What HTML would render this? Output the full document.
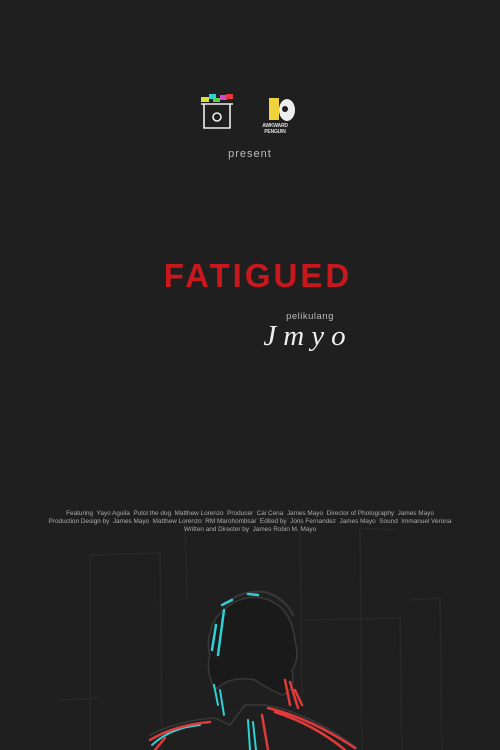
<!DOCTYPE html>
<html><head><meta charset="utf-8"><style>
html,body{margin:0;padding:0;}
body{width:500px;height:750px;background:#1f1f1f;position:relative;overflow:hidden;font-family:"Liberation Sans",sans-serif;}
.t{position:absolute;left:0;width:500px;text-align:center;}
</style></head><body>
<svg width="500" height="750" style="position:absolute;left:0;top:0">
<rect width="500" height="750" fill="#1f1f1f"/>
<g stroke="#282828" stroke-width="1.5" fill="none">
<path d="M90 555 L90 750 M90 555 L160 553 L162 750"/>
<path d="M185 520 L300 518 L302 700 M185 520 L187 600"/>
<path d="M360 528 L362 750 M360 528 L395 530"/>
<path d="M300 620 L400 618 L402 750"/>
<path d="M410 600 L440 598 L442 750"/>
<path d="M60 700 L100 698"/>
</g>
<g fill="none" stroke-linecap="round" stroke-linejoin="round">
<path d="M215 620 Q230 598 255 597 Q290 600 295 640 Q300 660 292 670 Q296 690 282 695 Q270 690 255 680 Q230 675 215 690 Q205 670 210 655 Q205 640 215 620Z" stroke="#383838" stroke-width="1.6" fill="#1a1a1a"/>
<path d="M230 600 Q245 590 265 592 Q285 598 293 615" stroke="#383838" stroke-width="2"/>
<path d="M150 735 Q180 720 215 718 L230 725 L245 705 L265 705 L280 708 Q320 720 357 748" stroke="#383838" stroke-width="1.6"/>
<path d="M212 650 L216 625 M218 655 L224 610 M222 605 L232 600" stroke="#2fd0d4" stroke-width="2.5"/>
<path d="M248 594 L258 595" stroke="#2fd0d4" stroke-width="2.5"/>
<path d="M214 685 L218 705 M220 690 L224 715" stroke="#2fd0d4" stroke-width="2"/>
<path d="M248 720 L250 750 M253 722 L256 750" stroke="#2fd0d4" stroke-width="2"/>
<path d="M152 745 Q170 728 200 725" stroke="#2fd0d4" stroke-width="2"/>
<path d="M285 680 L290 705 M290 682 L298 708 M295 690 L302 705" stroke="#e03a3a" stroke-width="2.5"/>
<path d="M268 708 Q310 718 355 748 M275 712 Q315 725 345 750 M262 715 L268 750" stroke="#e03a3a" stroke-width="2.5"/>
<path d="M150 740 Q175 725 210 722 M155 750 L165 738" stroke="#e03a3a" stroke-width="2.5"/>
</g>
<rect x="201" y="97" width="8" height="5" fill="#d8e03a"/>
<rect x="209" y="94" width="7" height="5" fill="#2fd0d4"/>
<rect x="213" y="98" width="7" height="4" fill="#5ad04a"/>
<rect x="220" y="95" width="7" height="5" fill="#d04ad0"/>
<rect x="226" y="94" width="7" height="5" fill="#e03a3a"/>
<path d="M201 104 L233 104 M204 104 L204 128 L230 128 L230 104" stroke="#eee" stroke-width="1.6" fill="none"/>
<circle cx="217" cy="117" r="4" stroke="#eee" stroke-width="1.6" fill="none"/>
<rect x="269" y="98" width="10" height="22" fill="#f0d23a"/>
<ellipse cx="287" cy="110" rx="8" ry="11" fill="#eee"/>
<circle cx="285" cy="109" r="3" fill="#1f1f1f"/>
</svg>
<div class="t" style="top:123px;left:-3px;font-size:5px;font-weight:bold;color:#ddd;padding-left:28px;letter-spacing:-.2px">AWKWARD<br>PENGUIN</div>
<div class="t" style="top:148px;font-size:11px;color:#bbb;letter-spacing:1px">present</div>
<div class="t" style="top:257px;font-size:33px;font-weight:bold;color:#c8181d;letter-spacing:3px;left:8px">FATIGUED</div>
<div class="t" style="top:311px;left:60px;font-size:9.5px;color:#bbb;letter-spacing:.5px">pelikulang</div>
<div class="t" style="top:320px;left:58px;font-size:29px;color:#eee;font-family:'Liberation Serif',serif;font-style:italic;letter-spacing:7px">Jmyo</div>
<div class="t" style="top:510px;font-size:6.4px;line-height:8px;color:#aaa;">Featuring&nbsp; Yayo Aguila&nbsp; Putol the dog&nbsp; Matthew Lorenzo&nbsp; Producer&nbsp; Cai Cena&nbsp; James Mayo&nbsp; Director of Photography&nbsp; James Mayo<br>Production Design by&nbsp; James Mayo&nbsp; Matthew Lorenzo&nbsp; RM Marohombsar&nbsp; Edited by&nbsp; Jons Fernandez&nbsp; James Mayo&nbsp; Sound&nbsp; Immanuel Verona<br>Written and Directer by&nbsp; James Robin M. Mayo</div>
</body></html>
